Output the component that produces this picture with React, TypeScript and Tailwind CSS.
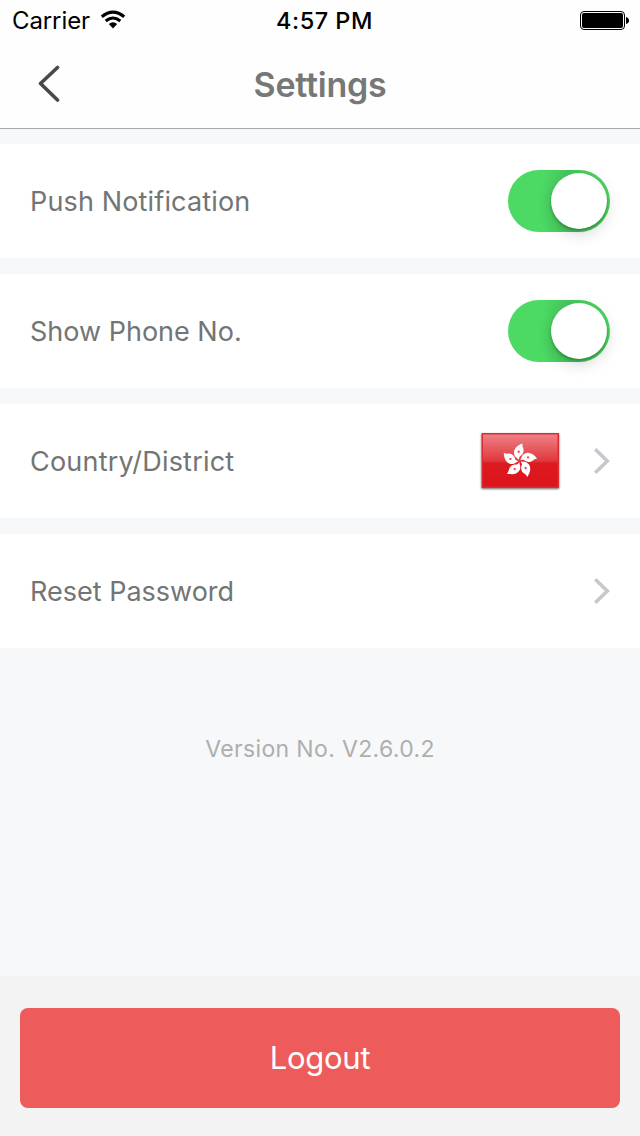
import React from "react";

function Toggle() {
  return (
    <button aria-label="toggle" className="flex h-[62px] w-[102px] items-center justify-end rounded-full bg-[linear-gradient(90deg,#4cd964_35%,#45c75c_60%,#4cd964_100%)] pr-[3px]">
      <span className="size-[56px] rounded-full bg-white shadow-[0_5px_16px_rgba(0,0,0,0.16),0_2px_3px_rgba(0,0,0,0.25)]" />
    </button>
  );
}

function Chevron() {
  return (
    <svg width="18" height="28" viewBox="0 0 18 28" fill="none" stroke="#c7c7cc" strokeWidth="3.6">
      <path d="M3.2 2.2 15.3 14 3.2 25.8" />
    </svg>
  );
}

const petals = [0, 72, 144, 216, 288];

function Flag() {
  return (
    <svg width="82" height="62" viewBox="0 0 82 62">
      <defs>
        <linearGradient id="red" x1="0" y1="0" x2="0" y2="1">
          <stop offset="0" stopColor="#ed8185" />
          <stop offset="0.5" stopColor="#e0393e" />
          <stop offset="0.56" stopColor="#dc1a20" />
          <stop offset="1" stopColor="#dd141b" />
        </linearGradient>
        <filter id="shade" x="-5%" y="-5%" width="110%" height="115%">
          <feDropShadow dx="0" dy="1" stdDeviation="1" floodColor="#000" floodOpacity="0.6" />
        </filter>
      </defs>
      <rect x="2.5" y="3" width="77.5" height="55" fill="#df2b31" filter="url(#shade)" />
      <rect x="4" y="4.5" width="74.5" height="52" fill="url(#red)" />
      <g transform="translate(40.5 31)">
        {petals.map((a) => (
          <g key={a} transform={`rotate(${a})`}>
            <path d="M-.5-1C-2-3-5-3.5-5.5-7.5C-6-12-2.5-15.5 3-17.5Q2.5-15 3.8-12.5C4.8-9 3-6 .2-4.5Q-.7-3-.5-1Z" fill="#fff" />
            <circle cx="-.8" cy="-9.3" r="1.2" fill="#e5555b" />
          </g>
        ))}
      </g>
    </svg>
  );
}

function Row({ label, spacing, children }: { label: string; spacing: string; children: React.ReactNode }) {
  return (
    <div className="flex h-[114px] items-center justify-between bg-white px-[30px]">
      <span className={`pt-[2px] text-[27px] leading-8 text-[#727574] ${spacing}`}>{label}</span>
      <div className="flex items-center">{children}</div>
    </div>
  );
}

export default function App() {
  return (
    <div className="flex h-[1136px] w-[640px] flex-col bg-[#f7f8fa] font-['Inter',sans-serif]">
      <header className="h-[129px] border-b border-[#a8a8ab] bg-[#fefefe]">
        <div className="grid h-10 grid-cols-3 items-center pl-3 pr-[11px] text-[24px] text-black">
          <div className="flex items-center gap-[10px]">
            <span className="pt-[2px] tracking-[-0.1px]">Carrier</span>
            <svg width="26" height="20" viewBox="0 0 26 20" fill="none" stroke="#000" strokeWidth="3.1">
              <path d="M1.8 6.7Q13-2.6 24.2 6.7M5.7 11Q13 5 20.3 11" />
              <path d="M8.8 14.1Q13 10.3 17.2 14.1L13 18.6Z" fill="#000" stroke="none" />
            </svg>
          </div>
          <span className="pt-[2px] pl-2 text-center text-[23.5px] font-medium tracking-[0.5px]">4:57 PM</span>
          <svg className="mt-px justify-self-end" width="49" height="20" viewBox="0 0 49 20">
            <rect x="0.5" y="0.5" width="44" height="18" rx="3.5" fill="none" stroke="#000" />
            <rect x="2" y="2" width="41" height="15" rx="2" />
            <path d="M46 6Q49 7 49 9.5T46 13Z" />
          </svg>
        </div>
        <div className="grid h-[88px] grid-cols-3 items-center px-9">
          <svg width="26" height="38" viewBox="0 0 26 38" fill="none" stroke="#48484b" strokeWidth="3.6" strokeLinecap="round" strokeLinejoin="round">
            <path d="M21.5 2.5 4.5 18.5 21.5 35" />
          </svg>
          <h1 className="pt-px text-center text-[34px] leading-10 font-semibold tracking-[-0.25px] text-[#767877]">Settings</h1>
        </div>
      </header>
      <main className="flex flex-col gap-4 pt-[15px]">
        <Row label="Push Notification" spacing="tracking-[0.15px]"><Toggle /></Row>
        <Row label="Show Phone No." spacing="tracking-[0px]"><Toggle /></Row>
        <Row label="Country/District" spacing="tracking-[0.2px]">
          <div className="mr-[31px]"><Flag /></div>
          <Chevron />
        </Row>
        <Row label="Reset Password" spacing="tracking-[0px]"><Chevron /></Row>
      </main>
      <p className="mt-[85px] text-center text-[23px] leading-8 tracking-[0.35px] text-[#adafae]">Version No. V2.6.0.2</p>
      <footer className="mt-auto h-40 bg-[#f3f3f3] px-5 pt-8">
        <button className="h-[100px] w-full rounded-lg bg-[#ee5b5b] pt-px text-[31px] tracking-[-0.25px] text-white">Logout</button>
      </footer>
    </div>
  );
}
